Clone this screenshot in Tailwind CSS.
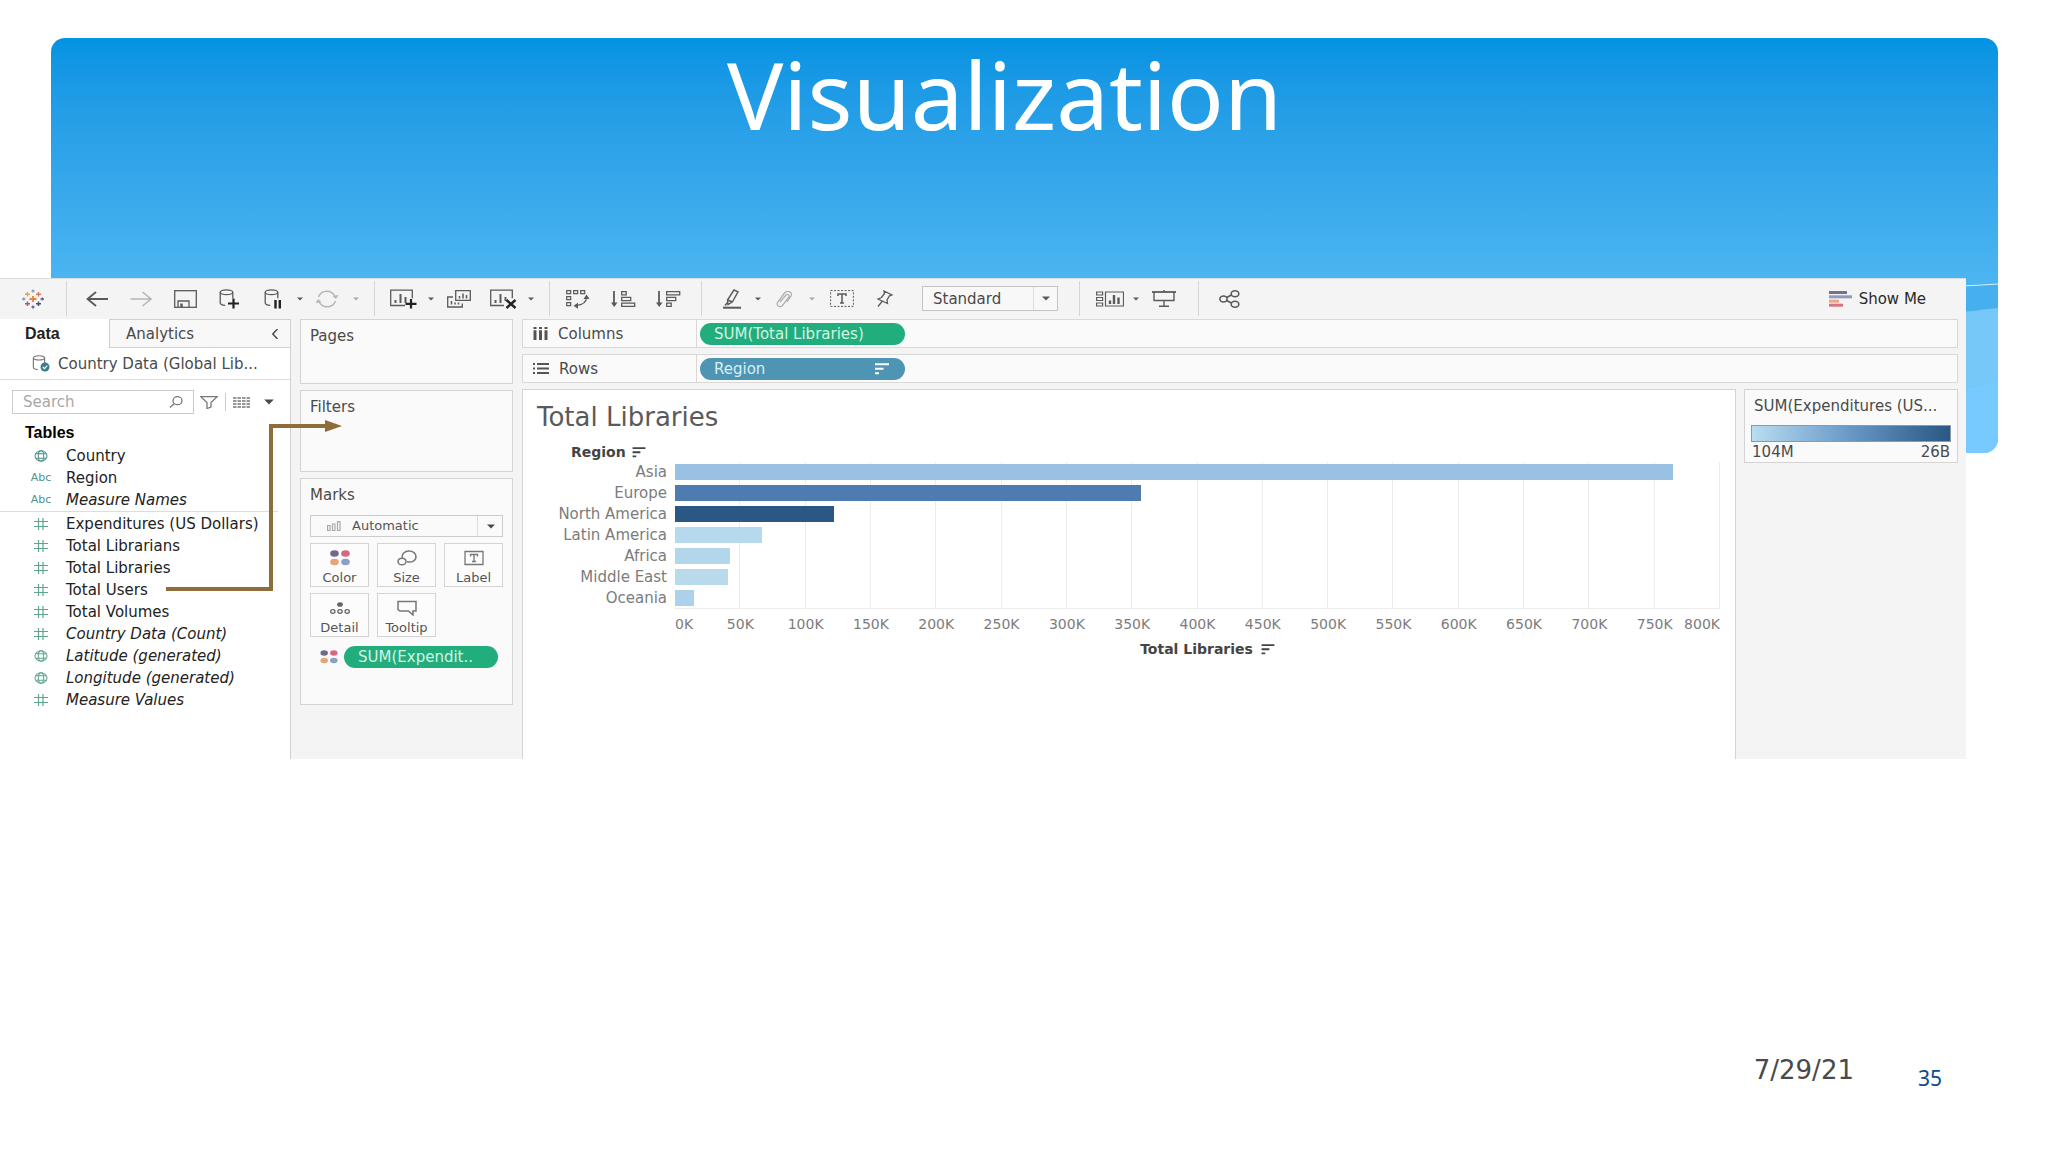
<!DOCTYPE html>
<html lang="en">
<head>
<meta charset="utf-8">
<meta name="viewport" content="width=device-width, initial-scale=1">
<title>Visualization</title>
<script src="https://cdn.jsdelivr.net/npm/@tailwindcss/browser@4"></script>
</head>
<body class="bg-white font-['DejaVu_Sans',sans-serif] text-[15px] leading-5 text-[#4a4a4a]">

<svg class="hidden" aria-hidden="true">
  <symbol id="caret" viewBox="0 0 8 5"><path d="M0 .5h8L4 4.5z" fill="currentColor"/></symbol>
  <symbol id="hash" viewBox="0 0 14 12"><path d="M4.500 0v12M9 0v12M0 3.500h14M0 8.500h14" fill="none" stroke="currentColor" stroke-width="1.200"/></symbol>
  <symbol id="globe" viewBox="0 0 16 14"><g fill="none" stroke="currentColor" stroke-width="1.200"><ellipse cx="8" cy="7" rx="7" ry="6"/><ellipse cx="8" cy="7" rx="3.200" ry="6"/><path d="M2 4.500h12M2 9.500h12"/></g></symbol>
  <symbol id="dots" viewBox="0 0 20 16"><ellipse cx="4.500" cy="3.500" rx="4.300" ry="3.200" fill="#6f6a8c"/><ellipse cx="15.500" cy="3.500" rx="4.300" ry="3.200" fill="#d7687c"/><ellipse cx="4.500" cy="12" rx="4.300" ry="3.200" fill="#e8a478"/><ellipse cx="15.500" cy="12" rx="4.300" ry="3.200" fill="#8c9fc4"/></symbol>
  <symbol id="sorted" viewBox="0 0 14 12"><path d="M0 1.200h14M0 5.700h8.500M0 10.200h4" fill="none" stroke="currentColor" stroke-width="2"/></symbol>
  <symbol id="db" viewBox="0 0 14 18"><path d="M.7 3.200v10.600c0 1.500 2 2.400 5 2.500M13.300 3.200v6" fill="none" stroke="currentColor" stroke-width="1.300"/><ellipse cx="7" cy="3.200" rx="6.300" ry="2.400" fill="none" stroke="currentColor" stroke-width="1.300"/></symbol>
</svg>

<div class="flex min-h-screen flex-col overflow-x-hidden">

  <header class="relative mt-[38px] mr-[50px] ml-[51px] h-[415px] overflow-hidden rounded-[14px] bg-linear-to-b from-[#0293e2] via-[#4cb6f1] via-60% to-[#80d0ff]">
    <h1 class="pr-10 text-center font-['Noto_Sans',sans-serif] text-[94px] leading-[112px] text-white">Visualization</h1>
    <svg class="absolute right-0 bottom-0 h-[175px] w-[100px]" viewBox="0 0 100 175" aria-hidden="true">
      <path d="M0 9Q60 9 100 6V32Q60 34 0 44z" fill="#46b0ef"/>
      <path d="M0 44Q60 34 100 30V103Q70 110 0 125z" fill="#76c8f8"/>
      <path d="M0 125Q70 112 100 102V175H0z" fill="#77caff"/>
      <path d="M0 9Q60 9 100 6" fill="none" stroke="#d5effd" stroke-width="1"/>
    </svg>
  </header>

  <main class="relative -mt-[175px] flex w-[96%] flex-col bg-[#f4f4f4]">

    <div class="flex h-[41px] items-stretch border-t border-[#d8dde0] pt-0.5 pb-[3px] text-[#5a5a5a]" role="toolbar" aria-label="Workbook">
      <div class="flex w-[67px] items-center justify-center border-r border-[#d5d5d5]">
        <button aria-label="Start page"><svg class="h-5 w-6" viewBox="0 0 24 20" fill="none" stroke-width="1.500"><path d="M12 7v6M8.500 10h7" stroke="#e8833a" stroke-width="1.800"/><path d="M6.500 3v4.500M4 5.200h5" stroke="#e0a94a"/><path d="M17.500 3v4.500M15 5.200h5" stroke="#d9785b"/><path d="M6.500 12.500V17M4 14.800h5" stroke="#c0506a"/><path d="M17.500 12.500V17M15 14.800h5" stroke="#3f5574"/><path d="M12 .5v3M10.500 2h3M1 10h3.500M2.700 8.500v3" stroke="#7f9fbd"/><path d="M12 16.500v3M10.500 18h3M19.500 10H23M21.300 8.500v3" stroke="#5c6692"/></svg></button>
      </div>
      <div class="flex w-[308px] items-center border-r border-[#d5d5d5] pl-2">
        <button class="flex w-11 justify-center" aria-label="Undo"><svg class="h-4 w-[22px]" viewBox="0 0 22 16" fill="none" stroke="currentColor" stroke-width="1.800"><path d="M22 8H1.500M10 1L1.500 8L10 15"/></svg></button>
        <button class="flex w-11 justify-center text-[#b5b5b5]" aria-label="Redo"><svg class="h-4 w-[23px]" viewBox="0 0 22 16" fill="none" stroke="currentColor" stroke-width="1.600"><path d="M0 8h20.500M12 1l8.500 7L12 15"/></svg></button>
        <button class="flex w-11 justify-center" aria-label="Save"><svg class="h-[18px] w-[23px]" viewBox="0 0 23 18" fill="none" stroke="currentColor" stroke-width="1.300"><rect x=".7" y=".7" width="21.600" height="16.600"/><path d="M4 17v-6h11v6"/><path d="M7.500 17v-3.500" stroke-width="2.500"/></svg></button>
        <button class="flex w-11 justify-center" aria-label="New data source"><svg class="h-5 w-5" viewBox="0 0 20 20"><use href="#db" width="15" height="18"/><path d="M14.500 9.500v10M9 14.500h11" stroke="#222" stroke-width="2.200"/></svg></button>
        <button class="flex w-11 justify-center" aria-label="Pause auto updates"><svg class="h-5 w-[18px]" viewBox="0 0 18 20"><use href="#db" width="15" height="18"/><path d="M11.500 11v8.500M15.800 11v8.500" stroke="#222" stroke-width="2.400"/></svg></button>
        <button class="flex w-2.5 justify-center" aria-label="Update options"><svg class="h-1 w-1.5"><use href="#caret"/></svg></button>
        <button class="flex w-11 justify-center text-[#b5b5b5]" aria-label="Run update"><svg class="h-[18px] w-6" viewBox="0 0 24 18" fill="none" stroke="currentColor" stroke-width="1.500"><path d="M3.500 7C5 3 8.500 1.200 12 1.200c3.500 0 6.500 2 8 5.300M20.500 11c-1.500 4-5 5.800-8.500 5.800-3.500 0-6.500-2-8-5.300"/><path d="M17.500 6l3.500 3L23.500 5zM.5 13L3 9l3.500 3z" fill="currentColor" stroke="none"/></svg></button>
        <button class="flex w-3.5 justify-center text-[#aaa]" aria-label="Run options"><svg class="h-1 w-1.5"><use href="#caret"/></svg></button>
      </div>
      <div class="flex w-[175px] items-center border-r border-[#d5d5d5] pl-1.5">
        <button class="flex w-11 justify-center" aria-label="New worksheet"><svg class="h-5 w-[27px]" viewBox="0 0 27 20" fill="none" stroke="currentColor"><path d="M15 16.500H.7V1.200h21.600v8" stroke-width="1.300"/><path d="M5.500 14v-3M10.500 14V5M15.500 14V8" stroke-width="2"/><path d="M21 10v9.500M15.500 14.800h11" stroke="#222" stroke-width="2.200"/></svg></button>
        <button class="flex w-3 justify-center" aria-label="New worksheet options"><svg class="h-1 w-1.5"><use href="#caret"/></svg></button>
        <button class="flex w-11 justify-center" aria-label="Duplicate"><svg class="h-[18px] w-6" viewBox="0 0 24 18" fill="none" stroke="currentColor" stroke-width="1.300"><path d="M8.700.7h14.600v9.600H8.700zM6 7H.7v10h14.600v-3.500"/><path d="M12.500 8.500V6M16 8.500V3.500M19.500 8.500V5M4.500 14.500V11M8 14.500V12.500M11.500 14.500v-2" stroke-width="1.500"/></svg></button>
        <button class="flex w-11 justify-center" aria-label="Clear sheet"><svg class="h-5 w-[27px]" viewBox="0 0 27 20" fill="none" stroke="currentColor"><path d="M14 16.500H.7V1.200h21.600v8" stroke-width="1.300"/><path d="M5.500 14v-3M10.500 14V5M15.500 12V8" stroke-width="2"/><path d="M16.500 11l9 8M25.500 11l-9 8" stroke="#222" stroke-width="2.400"/></svg></button>
        <button class="flex w-3 justify-center" aria-label="Clear options"><svg class="h-1 w-1.5"><use href="#caret"/></svg></button>
      </div>
      <div class="flex w-[152px] items-center gap-px border-r border-[#d5d5d5] pl-1.5">
        <button class="flex w-11 justify-center" aria-label="Swap rows and columns"><svg class="h-5 w-6" viewBox="0 0 24 20" fill="none" stroke="currentColor" stroke-width="1.200"><path d="M.7 1.700h4v3h-4zM7.700 1.700h4v3h-4zM14.700 1.700h4v3h-4zM.7 7.700h4v3h-4zM.7 13.700h4v3h-4z"/><path d="M20.500 8c0 5-4 8-10.500 8.500"/><path d="M20.500 5.500l3 4.500h-6zM7.500 16.700l4.500-3v6z" fill="currentColor" stroke="none"/></svg></button>
        <button class="flex w-11 justify-center" aria-label="Sort ascending"><svg class="h-[18px] w-[25px]" viewBox="0 0 25 18" fill="none" stroke="currentColor" stroke-width="1.300"><path d="M3 1v14" stroke-width="1.800"/><path d="M0 12.500h6.500L3.200 17z" fill="currentColor" stroke="none"/><path d="M10.700 1.700h4.500v3.200h-4.500zM10.700 7.400h9v3.200h-9zM10.700 13.100h13v3.200h-13z"/></svg></button>
        <button class="flex w-11 justify-center" aria-label="Sort descending"><svg class="h-[18px] w-[25px]" viewBox="0 0 25 18" fill="none" stroke="currentColor" stroke-width="1.300"><path d="M3 1v14" stroke-width="1.800"/><path d="M0 12.500h6.500L3.200 17z" fill="currentColor" stroke="none"/><path d="M10.700 1.700h13v3.200h-13zM10.700 7.400h9v3.200h-9zM10.700 13.100h4.500v3.200h-4.500z"/></svg></button>
      </div>
      <div class="flex w-[378px] items-center border-r border-[#d5d5d5] pl-2">
        <button class="flex w-11 justify-center" aria-label="Highlight"><svg class="h-5 w-[18px]" viewBox="0 0 18 20" fill="none" stroke="currentColor" stroke-width="1.400"><path d="M11 1l4 1.800-5.500 10L5 15.500 4.500 11zM4.500 11l5 2M4.500 13.500L2 16.500"/><path d="M0 18.700h18" stroke-width="2"/></svg></button>
        <button class="flex w-2 justify-center" aria-label="Highlight options"><svg class="h-1 w-1.5"><use href="#caret"/></svg></button>
        <button class="flex w-11 justify-center text-[#b0b0b0]" aria-label="Group members"><svg class="h-[18px] w-[18px]" viewBox="0 0 18 18" fill="none" stroke="currentColor" stroke-width="1.300"><path d="M5 12l6-7c1.500-1.500 4 0 3 2l-6.500 8.500c-2 2.500-6.500.5-5-3L9.500 3c2.500-3 8-1.500 6.800 2.500L12 12"/></svg></button>
        <button class="flex w-3 justify-center text-[#aaa]" aria-label="Group options"><svg class="h-1 w-1.5"><use href="#caret"/></svg></button>
        <button class="flex w-12 justify-center" aria-label="Show mark labels"><svg class="h-[17px] w-6" viewBox="0 0 24 17" fill="none" stroke="currentColor"><rect x=".6" y=".6" width="22.800" height="15.800" stroke-dasharray="2 1.500"/><path d="M8 6V4h8v2M12 4v9M10 13h4" stroke-width="1.500"/></svg></button>
        <button class="flex w-9 justify-center" aria-label="Fix axes"><svg class="h-[18px] w-[17px]" viewBox="0 0 17 18" fill="none" stroke="currentColor" stroke-width="1.300"><path d="M8 1l8 4-2.500.8-2.500 4 .5 3.700L2 9l3.500-1.500 3-4zM6.500 11L2 16.500"/></svg></button>
        <div class="relative ml-5">
          <select aria-label="Fit" class="block h-[25px] w-[136px] appearance-none border border-[#c4c4c4] bg-[#f8f8f8] pl-2.5 text-[15px] text-[#4a4a4a]"><option>Standard</option></select>
          <svg class="pointer-events-none absolute top-[10px] right-2 h-[5px] w-2"><use href="#caret"/></svg>
          <span class="pointer-events-none absolute top-px right-6 h-[23px] w-px bg-[#ddd]"></span>
        </div>
      </div>
      <div class="flex w-[119px] items-center border-r border-[#d5d5d5] pl-2">
        <button class="flex w-11 justify-center" aria-label="Show or hide cards"><svg class="h-4 w-7" viewBox="0 0 28 16" fill="none" stroke="currentColor" stroke-width="1.200"><path d="M.6 1h6v3h-6zM.6 6.500h6v3h-6zM.6 12h6v3h-6zM9.500 1h18v14h-18z"/><path d="M14 13V9.500M18 13V4M22.500 13V6.500" stroke-width="2.400"/></svg></button>
        <button class="flex w-2 justify-center" aria-label="Card options"><svg class="h-1 w-1.5"><use href="#caret"/></svg></button>
        <button class="flex w-12 justify-center" aria-label="Presentation mode"><svg class="h-[17px] w-6" viewBox="0 0 24 17" fill="none" stroke="currentColor" stroke-width="1.400"><path d="M0 2h24" stroke-width="1.800"/><path d="M2 2v8.500h20V2M12 10.500V16M7 16.200h10M12 0v2"/></svg></button>
      </div>
      <button class="ml-2 flex w-11 items-center justify-center" aria-label="Share"><svg class="h-[18px] w-[21px]" viewBox="0 0 21 18" fill="none" stroke="currentColor" stroke-width="1.600"><ellipse cx="4.500" cy="9" rx="3.600" ry="3"/><ellipse cx="16" cy="3.800" rx="3.800" ry="3"/><ellipse cx="16" cy="14.200" rx="3.800" ry="3"/><path d="M7.500 7.500l5-2.500M7.500 10.500l5 2.500"/></svg></button>
      <button class="mr-10 ml-auto flex items-center gap-[7px] text-[15px] text-[#2a2a2a]"><svg class="h-4 w-[23px]" viewBox="0 0 23 16"><path d="M0 0h18v3H0z" fill="#77708f"/><path d="M0 4.300h23v3H0z" fill="#8f9cc2"/><path d="M0 8.700h10v3H0z" fill="#eba58c"/><path d="M0 12.700h14v3H0z" fill="#d67484"/></svg>Show Me</button>
    </div>

    <div class="flex min-h-[440px] items-stretch">

      <aside class="w-[291px] shrink-0 border-r border-[#d0d0d0] bg-white" aria-label="Data pane">
        <div class="flex h-[29px]" role="tablist">
          <button class="w-[109px] pr-1 pl-[25px] text-left font-['Liberation_Sans',sans-serif] text-base font-bold text-[#222]" role="tab" aria-selected="true">Data</button>
          <button class="flex flex-1 items-center justify-between border border-r-0 border-[#d0d0d0] bg-[#f8f8f8] pr-3 pl-4" role="tab">Analytics<svg class="h-2.5 w-1.5" viewBox="0 0 6 10" fill="none" stroke="currentColor" stroke-width="1.500"><path d="M5.500 0L.8 5l4.700 5"/></svg></button>
        </div>
        <button class="flex h-8 w-full items-center gap-2 border-b border-[#dcdcdc] pl-8 text-[15px] whitespace-nowrap"><svg class="h-[17px] w-[18px] shrink-0" viewBox="0 0 18 17"><g class="text-[#777]"><use href="#db" width="14" height="16"/></g><circle cx="13" cy="12" r="4.500" fill="#37808c"/><path d="M10.800 12l1.700 1.700 2.800-3" fill="none" stroke="#fff" stroke-width="1.100"/></svg>Country Data (Global Lib...</button>
        <div class="mt-2.5 flex items-center pl-3">
          <div class="flex h-6 w-[182px] items-center border border-[#ccc] pr-2.5">
            <input aria-label="Search fields" class="h-full w-full min-w-0 pl-2.5 text-[15px] outline-none placeholder:text-[#a8a8a8]" placeholder="Search">
            <svg class="h-3 w-3.5 shrink-0" viewBox="0 0 14 12" fill="none" stroke="#777" stroke-width="1.300"><ellipse cx="8.500" cy="4.700" rx="4.500" ry="4"/><path d="M5 8L.8 11.500"/></svg>
          </div>
          <button class="ml-1.5" aria-label="Filter fields"><svg class="h-[13px] w-[18px]" viewBox="0 0 18 13" fill="none" stroke="#777" stroke-width="1.300"><path d="M.8.700h16.400L11 6.500V11L7 12.500v-6z"/></svg></button>
          <span class="ml-[7px] h-[18px] w-px bg-[#ccc]"></span>
          <button class="ml-[7px] flex items-center gap-3.5" aria-label="View options"><svg class="h-[11px] w-[17px]" viewBox="0 0 17 11" fill="none" stroke="#777" stroke-width="1.500"><path d="M0 1h17M0 4h17M0 7h17M0 10h17" stroke-dasharray="3.500 1"/></svg><svg class="h-[6px] w-2.5"><use href="#caret"/></svg></button>
        </div>
        <h2 class="mt-[9px] pl-[25px] font-['Liberation_Sans',sans-serif] text-base leading-5 font-bold text-black">Tables</h2>
        <ul class="mt-0.5 text-[#222] [&_button]:flex [&_button]:h-[22px] [&_button]:w-full [&_button]:items-center [&_button]:gap-2.5 [&_button]:pl-[26px] [&_button]:text-left [&_button]:whitespace-nowrap [&_svg]:mx-auto [&_svg]:h-3 [&_svg]:w-3.5">
          <li><button><span class="w-[30px] text-[#4f9188]"><svg><use href="#globe"/></svg></span>Country</button></li>
          <li><button><span class="w-[30px] text-center text-[11px] text-[#4f9188]">Abc</span>Region</button></li>
          <li class="mr-3 border-b border-[#ddd]"><button><span class="w-[30px] text-center text-[11px] text-[#4f9188]">Abc</span><i>Measure Names</i></button></li>
          <li class="pt-px"><button><span class="w-[30px] text-[#5fa58c]"><svg><use href="#hash"/></svg></span>Expenditures (US Dollars)</button></li>
          <li><button><span class="w-[30px] text-[#5fa58c]"><svg><use href="#hash"/></svg></span>Total Librarians</button></li>
          <li><button><span class="w-[30px] text-[#5fa58c]"><svg><use href="#hash"/></svg></span>Total Libraries</button></li>
          <li><button><span class="w-[30px] text-[#5fa58c]"><svg><use href="#hash"/></svg></span>Total Users</button></li>
          <li><button><span class="w-[30px] text-[#5fa58c]"><svg><use href="#hash"/></svg></span>Total Volumes</button></li>
          <li><button><span class="w-[30px] text-[#5fa58c]"><svg><use href="#hash"/></svg></span><i>Country Data (Count)</i></button></li>
          <li><button><span class="w-[30px] text-[#5fa58c]"><svg><use href="#globe"/></svg></span><i>Latitude (generated)</i></button></li>
          <li><button><span class="w-[30px] text-[#5fa58c]"><svg><use href="#globe"/></svg></span><i>Longitude (generated)</i></button></li>
          <li><button><span class="w-[30px] text-[#5fa58c]"><svg><use href="#hash"/></svg></span><i>Measure Values</i></button></li>
        </ul>
      </aside>

      <div class="flex w-[231px] shrink-0 flex-col gap-1.5 px-[9px]">
        <section class="h-[65px] border border-[#d4d4d4] bg-[#fafafa] px-[9px] py-1.5"><h2>Pages</h2></section>
        <section class="h-[82px] border border-[#d4d4d4] bg-[#fafafa] px-[9px] py-1.5"><h2>Filters</h2></section>
        <section class="h-[227px] border border-[#d4d4d4] bg-[#fafafa] px-[9px] py-1.5">
          <h2>Marks</h2>
          <div class="relative mt-2.5">
            <select aria-label="Mark type" class="block h-[22px] w-full appearance-none border border-[#ccc] bg-[#fafafa] pl-[41px] text-[13px] leading-4 text-[#555]"><option>Automatic</option></select>
            <svg class="pointer-events-none absolute top-1.5 left-[17px] h-2.5 w-3.5" viewBox="0 0 14 10" fill="none" stroke="#aaa" stroke-width="1.200"><path d="M.6 4.500h2.500v5H.6zM5.500 3h2.500v6.500H5.500zM10.500.600h2.500v9h-2.500z"/></svg>
            <svg class="pointer-events-none absolute top-[9px] right-2 h-[5px] w-2"><use href="#caret"/></svg>
            <span class="pointer-events-none absolute top-px right-[25px] h-5 w-px bg-[#ddd]"></span>
          </div>
          <div class="mt-1.5 grid grid-cols-3 gap-x-2 gap-y-1.5 text-[13px] leading-4 text-[#555] [&_button]:flex [&_button]:h-11 [&_button]:flex-col [&_button]:items-center [&_button]:justify-between [&_button]:border [&_button]:border-[#d4d4d4] [&_button]:bg-[#fcfcfc] [&_button]:pt-1.5 [&_button]:whitespace-nowrap [&_svg]:h-4">
            <button><svg class="w-5"><use href="#dots"/></svg>Color</button>
            <button><svg class="w-5" viewBox="0 0 20 16" fill="none" stroke="#777" stroke-width="1.500"><path d="M5.200 8C4.500 4 7.500 1 12 1c4 0 7 2.500 7 5.700 0 3.800-4 6.300-9 5"/><ellipse cx="5" cy="11.500" rx="4" ry="3.300"/></svg>Size</button>
            <button><svg class="w-5" viewBox="0 0 20 16" fill="none" stroke="#777" stroke-width="1.300"><path d="M1 1.500h18v13H1z"/><path d="M6.500 6.500v-2h7v2M10 4.500v7M8 11.500h4"/></svg>Label</button>
            <button><svg class="w-5" viewBox="0 0 20 16" fill="none" stroke="#666" stroke-width="1.300"><ellipse cx="10" cy="4.500" rx="2.300" ry="1.700" fill="#666"/><ellipse cx="2.800" cy="11.500" rx="2.200" ry="1.800"/><ellipse cx="10" cy="11.500" rx="2.200" ry="1.800"/><ellipse cx="17.200" cy="11.500" rx="2.200" ry="1.800"/></svg>Detail</button>
            <button><svg class="w-5" viewBox="0 0 20 16" fill="none" stroke="#777" stroke-width="1.500"><path d="M1 1.500h18v9.500h-3v4l-4.500-4H3L1 9.500z"/></svg>Tooltip</button>
          </div>
          <div class="mt-[9px] flex items-center gap-1.5 pl-2.5">
            <svg class="h-3.5 w-[18px]"><use href="#dots"/></svg>
            <button class="h-[22px] w-[154px] rounded-full bg-[#22ad7d] px-3.5 text-left text-[#d3f3e5]">SUM(Expendit..</button>
          </div>
        </section>
      </div>

      <div class="flex min-w-0 flex-1 flex-col gap-1.5">
        <div class="mr-2 flex h-[29px] items-center border border-[#d8d8d8] bg-[#fafafa]">
          <div class="flex w-[174px] items-center gap-2.5 self-stretch border-r border-[#d8d8d8] pl-2.5"><svg class="h-[13px] w-[15px]" viewBox="0 0 15 13" stroke="#555" stroke-width="3"><path d="M2 0v2M2 3.200V13M7.500 0v2M7.500 3.200V13M13 0v2M13 3.200V13"/></svg>Columns</div>
          <button class="ml-[3px] h-[22px] w-[205px] rounded-full bg-[#22ad7d] px-3.5 text-left text-[#d3f3e5]">SUM(Total Libraries)</button>
        </div>
        <div class="mr-2 flex h-[29px] items-center border border-[#d8d8d8] bg-[#fafafa]">
          <div class="flex w-[174px] items-center gap-2.5 self-stretch border-r border-[#d8d8d8] pl-2.5"><svg class="h-[11px] w-4" viewBox="0 0 16 11" stroke="#555" stroke-width="1.800"><path d="M0 1h2M4 1h12M0 5.500h2M4 5.500h12M0 10h2M4 10h12"/></svg>Rows</div>
          <button class="ml-[3px] flex h-[22px] w-[205px] items-center justify-between rounded-full bg-[#4e95b3] pr-4 pl-3.5 text-[#d9edf5]">Region<svg class="h-3 w-3.5 text-white"><use href="#sorted"/></svg></button>
        </div>

        <div class="flex flex-1 gap-2">
          <section class="min-w-0 flex-1 border border-b-0 border-[#d4d4d4] bg-white pr-[15px]" aria-label="Sheet">
            <h2 class="pt-[11px] pl-3.5 text-[26px] leading-8 text-[#5a5a5a]">Total Libraries</h2>
            <h3 class="mt-[9px] flex items-center gap-1.5 pl-12 text-[14px] leading-5 font-bold text-[#444]">Region<svg class="h-[11px] w-3.5"><use href="#sorted"/></svg></h3>
            <div class="flex">
              <div class="mr-2 w-36 shrink-0 text-right text-[15px] leading-[21px] text-[#7c7c7c]">
                <div>Asia</div><div>Europe</div><div>North America</div><div>Latin America</div><div>Africa</div><div>Middle East</div><div>Oceania</div>
              </div>
              <div class="grid min-w-0 flex-1 border-b border-[#ececec]">
                <div class="flex [grid-area:1/1] [&>span]:flex-1 [&>span]:border-r [&>span]:border-[#ececec]">
                  <span></span><span></span><span></span><span></span><span></span><span></span><span></span><span></span><span></span><span></span><span></span><span></span><span></span><span></span><span></span><span></span>
                </div>
                <div class="flex flex-col gap-[5px] pt-0.5 [grid-area:1/1] [&>div]:h-4">
                  <div class="bg-[#98c1e3]" style="width:95.500%"></div>
                  <div class="bg-[#4e7bb0]" style="width:44.600%"></div>
                  <div class="bg-[#2a5783]" style="width:15.200%"></div>
                  <div class="bg-[#b7d9ed]" style="width:8.300%"></div>
                  <div class="bg-[#b2d7eb]" style="width:5.300%"></div>
                  <div class="bg-[#b9daea]" style="width:5.100%"></div>
                  <div class="bg-[#abd2ea]" style="width:1.800%"></div>
                </div>
              </div>
            </div>
            <div class="mt-[5px] ml-[152px] flex text-center text-[14px] leading-5 whitespace-nowrap text-[#7c7c7c] [&>span]:w-0 [&>span]:min-w-0 [&>span]:grow-2">
              <span class="grow! text-left">0K</span><span>50K</span><span>100K</span><span>150K</span><span>200K</span><span>250K</span><span>300K</span><span>350K</span><span>400K</span><span>450K</span><span>500K</span><span>550K</span><span>600K</span><span>650K</span><span>700K</span><span>750K</span><span class="flex grow! justify-end">800K</span>
            </div>
            <div class="mt-[5px] ml-[152px] flex items-center justify-center gap-2 pl-5 text-[14px] leading-5 font-bold text-[#444]">Total Libraries<svg class="h-[11px] w-3.5"><use href="#sorted"/></svg></div>
          </section>

          <aside class="mr-2 h-[74px] w-[214px] shrink-0 border border-[#d4d4d4] bg-[#fafafa] px-1.5 pt-1.5" aria-label="Color legend">
            <div class="pl-[3px] whitespace-nowrap">SUM(Expenditures (US...</div>
            <div class="mt-[9px] h-[17px] border border-[#8d9aa5] bg-linear-to-r from-[#b9ddf1] via-[#6798c6] to-[#2a5783]"></div>
            <div class="flex justify-between px-px leading-5"><span>104M</span><span>26B</span></div>
          </aside>
        </div>
      </div>
    </div>

    <svg class="pointer-events-none absolute top-[138px] left-[160px] h-[182px] w-[190px]" viewBox="0 0 190 182" fill="none" stroke="#8f6d3b" stroke-width="4" aria-hidden="true"><path d="M6 173H111V10H168"/><path d="M165 4l17 6-17 6z" fill="#8f6d3b" stroke="none"/></svg>
  </main>

  <footer class="mt-auto mb-[60px] flex items-start justify-end gap-16 pt-8 pr-[106px]">
    <time class="pt-0.5 text-[26px] leading-6" datetime="2021-07-29">7/29/21</time>
    <span class="pt-2 font-['Noto_Sans',sans-serif] text-[21px] leading-7 text-[#0b4a95]">35</span>
  </footer>
</div>
</body>
</html>
